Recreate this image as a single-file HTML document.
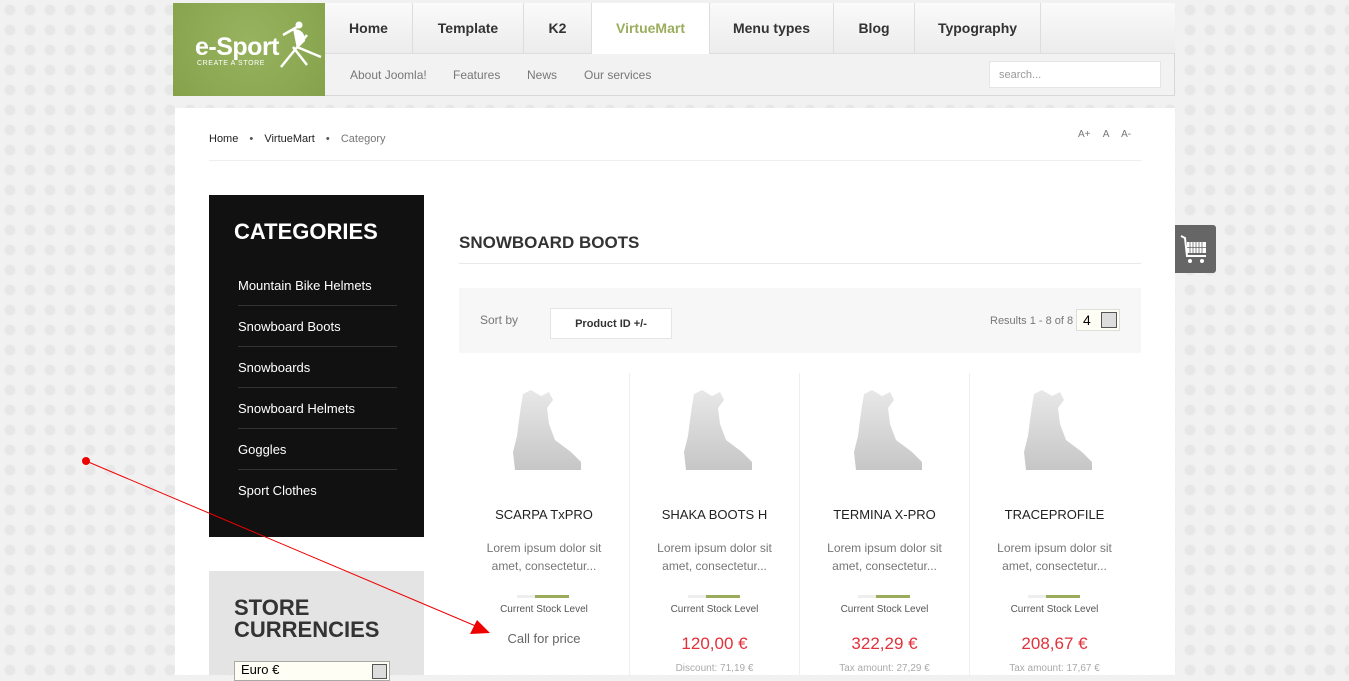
<!DOCTYPE html>
<html><head><meta charset="utf-8"><style>
*{margin:0;padding:0;box-sizing:border-box}
body{width:1349px;height:675px;overflow:hidden;position:relative;font-family:"Liberation Sans",Arial,sans-serif;background:#f1f1f1;background-image:radial-gradient(circle,#e7e7e7 35%,transparent 42%);background-size:20px 20px}
.a{position:absolute}
.nav div{position:absolute;top:0;height:51px;line-height:51px;text-align:center;font-weight:bold;font-size:14px;color:#333;border-right:1px solid #ddd}
.sub span{position:absolute;top:68px;font-size:12px;color:#777}
.cat{position:absolute;left:238px;width:159px;font-size:13px;color:#fff;border-bottom:1px solid #333;height:41px;line-height:41px}
.prod{position:absolute;top:373px;width:170px;height:302px;text-align:center;border-left:1px solid #eee}
.prod .t{position:absolute;top:134px;width:100%;font-size:13px;color:#222}
.prod .d{position:absolute;top:166px;width:100%;font-size:12px;color:#777;line-height:18px}
.prod .bar{position:absolute;top:222px;left:58px;width:52px;height:3px;background:#eee}
.prod .bar i{position:absolute;left:18px;top:0;width:34px;height:3px;background:#9aac5c}
.prod .s{position:absolute;top:231px;width:100%;font-size:10px;color:#555}
.prod .p{position:absolute;top:261px;width:100%;font-size:17px;color:#e2313a}
.prod .x{position:absolute;top:290px;width:100%;font-size:10px;color:#aaa}
.h{font-family:"Liberation Sans",sans-serif;font-weight:bold}
</style></head><body>
<div class="a" style="left:173px;top:3px;width:1002px;height:93px;background:#f2f2f2;border:1px solid #d8d8d8"></div>
<div class="a" style="left:325px;top:3px;width:850px;height:51px;background:linear-gradient(#fafafa,#ececec);border-bottom:1px solid #ddd"></div>
<div class="nav">
<div style="left:325px;width:88px;top:3px">Home</div>
<div style="left:413px;width:111px;top:3px">Template</div>
<div style="left:524px;width:68px;top:3px">K2</div>
<div style="left:592px;width:118px;top:3px;background:#fff;color:#9aae5e">VirtueMart</div>
<div style="left:710px;width:124px;top:3px">Menu types</div>
<div style="left:834px;width:81px;top:3px">Blog</div>
<div style="left:915px;width:126px;top:3px">Typography</div>
</div>
<div class="sub"><span style="left:350px">About Joomla!</span><span style="left:453px">Features</span><span style="left:527px">News</span><span style="left:584px">Our services</span></div>
<div class="a" style="left:989px;top:61px;width:172px;height:27px;background:#fff;border:1px solid #e5e5e5;font-size:11px;color:#999;padding:7px 9px">search...</div>
<div class="a" style="left:173px;top:3px;width:152px;height:93px;background:radial-gradient(circle at 50% 40%,#98b35f,#85a24b)">
<div class="a" style="left:22px;top:30px;font-size:25px;font-weight:bold;color:#fff;letter-spacing:-.5px">e-Sport</div>
<div class="a" style="left:24px;top:57px;font-size:7px;color:#fff;letter-spacing:.6px">CREATE A STORE</div>
<svg class="a" style="left:104px;top:18px" width="46" height="48"><path d="M6 14L20 6M4 46L30 14M16 26L30 44M20 26L44 36" stroke="#fff" stroke-width="2.5"/><circle cx="22" cy="4" r="3.5" fill="#fff"/><path d="M16 8Q28 8 28 20L20 28Z" fill="#fff"/></svg>
</div>
<div class="a" style="left:175px;top:108px;width:1000px;height:567px;background:#fff"></div>
<div class="a" style="left:209px;top:133px;font-size:11px;color:#222">Home <span style="color:#555;margin:0 8px">•</span> VirtueMart <span style="color:#555;margin:0 8px">•</span> <span style="color:#777">Category</span></div>
<div class="a" style="left:1078px;top:129px;font-size:10px;color:#777;word-spacing:10px">A+ A A-</div>
<div class="a" style="left:209px;top:160px;width:932px;height:1px;background:#eee"></div>
<div class="a" style="left:209px;top:195px;width:215px;height:342px;background:#111"></div>
<div class="a h" style="left:234px;top:219px;font-size:22px;color:#fff">CATEGORIES</div>
<div class="cat" style="top:265px">Mountain Bike Helmets</div>
<div class="cat" style="top:306px">Snowboard Boots</div>
<div class="cat" style="top:347px">Snowboards</div>
<div class="cat" style="top:388px">Snowboard Helmets</div>
<div class="cat" style="top:429px">Goggles</div>
<div class="cat" style="top:470px;border:0">Sport Clothes</div>
<div class="a" style="left:209px;top:571px;width:215px;height:104px;background:#e4e4e4"></div>
<div class="a h" style="left:234px;top:597px;font-size:22px;line-height:22px;color:#333">STORE<br>CURRENCIES</div>
<div class="a" style="left:234px;top:661px;width:156px;height:20px;background:#fffef5;border:1px solid #aaa;font-size:13px;padding-left:6px">Euro €</div>
<div class="a" style="left:372px;top:664px;width:15px;height:15px;background:#ddd;border:1px solid #555"></div>
<div class="a h" style="left:459px;top:233px;font-size:17px;color:#333">SNOWBOARD BOOTS</div>
<div class="a" style="left:459px;top:263px;width:682px;height:1px;background:#e8e8e8"></div>
<div class="a" style="left:459px;top:288px;width:682px;height:65px;background:#f7f7f7"></div>
<div class="a" style="left:480px;top:313px;font-size:12px;color:#777">Sort by</div>
<div class="a" style="left:550px;top:308px;width:122px;height:31px;background:#fff;border:1px solid #e5e5e5;font-size:11px;font-weight:bold;color:#333;text-align:center;line-height:30px">Product ID +/-</div>
<div class="a" style="left:990px;top:315px;font-size:11px;color:#777">Results 1 - 8 of 8</div>
<div class="a" style="left:1076px;top:309px;width:44px;height:22px;background:#fffef5;border:1px solid #ddd;font-size:14px;padding:2px 6px">4</div>
<div class="a" style="left:1101px;top:312px;width:16px;height:16px;background:#ddd;border:1px solid #555"></div>
<svg width="0" height="0" style="position:absolute"><defs><linearGradient id="g" x1="0" y1="0" x2="0" y2="1"><stop offset="0" stop-color="#e8e8e8"/><stop offset="1" stop-color="#c6c6c6"/></linearGradient><symbol id="b" viewBox="0 0 70 82"><path d="M12 4L20 0L30 6L38 2L42 10L36 18L38 34L44 50L60 62L70 72L70 80L4 80L2 62L6 46L8 30L10 16Z" fill="url(#g)"/></symbol></defs></svg>
<div class="prod" style="left:459px;border:0"><svg class="a" style="left:52px;top:17px" width="70" height="82"><use href="#b"/></svg><div class="t">SCARPA TxPRO</div><div class="d">Lorem ipsum dolor sit<br>amet, consectetur...</div><div class="bar"><i></i></div><div class="s">Current Stock Level</div><div class="p" style="font-size:13px;color:#666;top:258px">Call for price</div></div>
<div class="prod" style="left:629px"><svg class="a" style="left:52px;top:17px" width="70" height="82"><use href="#b"/></svg><div class="t">SHAKA BOOTS H</div><div class="d">Lorem ipsum dolor sit<br>amet, consectetur...</div><div class="bar"><i></i></div><div class="s">Current Stock Level</div><div class="p">120,00 €</div><div class="x">Discount: 71,19 €</div></div>
<div class="prod" style="left:799px"><svg class="a" style="left:52px;top:17px" width="70" height="82"><use href="#b"/></svg><div class="t">TERMINA X-PRO</div><div class="d">Lorem ipsum dolor sit<br>amet, consectetur...</div><div class="bar"><i></i></div><div class="s">Current Stock Level</div><div class="p">322,29 €</div><div class="x">Tax amount: 27,29 €</div></div>
<div class="prod" style="left:969px"><svg class="a" style="left:52px;top:17px" width="70" height="82"><use href="#b"/></svg><div class="t">TRACEPROFILE</div><div class="d">Lorem ipsum dolor sit<br>amet, consectetur...</div><div class="bar"><i></i></div><div class="s">Current Stock Level</div><div class="p">208,67 €</div><div class="x">Tax amount: 17,67 €</div></div>
<div class="a" style="left:1175px;top:225px;width:41px;height:48px;background:#666;border-radius:0 3px 3px 0"></div>
<svg class="a" style="left:1180px;top:234px" width="30" height="32"><path d="M1 2L5 4L7 22L26 22" stroke="#fff" stroke-width="2" fill="none"/><rect x="7" y="8" width="19" height="11" fill="#fff"/><path d="M10 8V19M13 8V19M16 8V19M19 8V19M22 8V19M7 13.5H26" stroke="#666" stroke-width=".8"/><circle cx="10" cy="27" r="2" fill="#fff"/><circle cx="22" cy="27" r="2" fill="#fff"/></svg>
<svg class="a" style="left:0;top:0" width="1349" height="675"><line x1="86" y1="461" x2="478" y2="627" stroke="#e00" stroke-width="1"/><circle cx="86" cy="461" r="4" fill="#e00"/><path d="M490 633L470 634L477 620Z" fill="#e00"/></svg>
</body></html>
